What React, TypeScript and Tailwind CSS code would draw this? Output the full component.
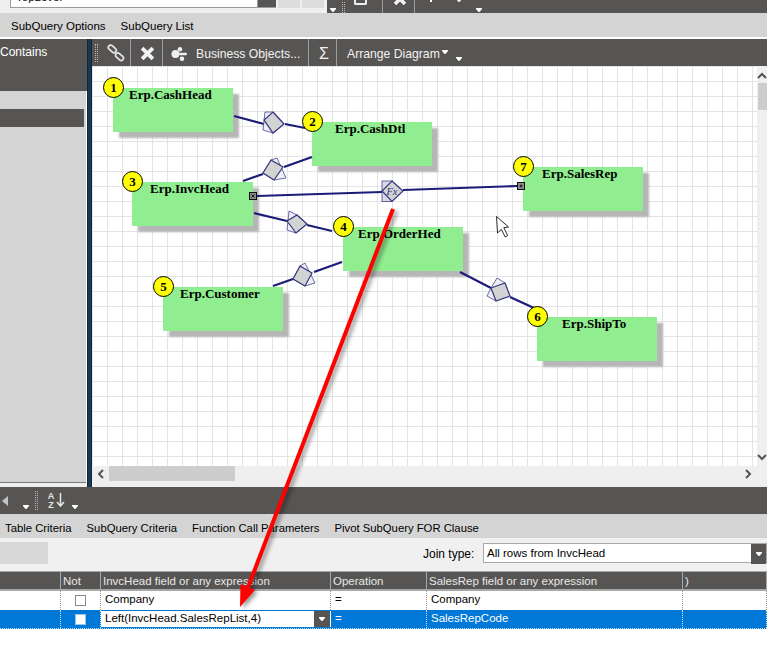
import React from "react";

const NODES = [
  { n: 1, label: "Erp.CashHead", x: 113, y: 88, w: 120, h: 44, pad: 16 },
  { n: 2, label: "Erp.CashDtl", x: 312, y: 122, w: 120, h: 44, pad: 23 },
  { n: 3, label: "Erp.InvcHead", x: 132, y: 182, w: 121, h: 44, pad: 18 },
  { n: 4, label: "Erp.OrderHed", x: 343, y: 227, w: 120, h: 44, pad: 15 },
  { n: 5, label: "Erp.Customer", x: 163, y: 287, w: 120, h: 44, pad: 17 },
  { n: 6, label: "Erp.ShipTo", x: 537, y: 317, w: 120, h: 44, pad: 25 },
  { n: 7, label: "Erp.SalesRep", x: 523, y: 167, w: 120, h: 44, pad: 19 },
];

// page coordinates, the svg viewBox lines up with the canvas
const LINES = [
  [234, 116, 264, 124], [285, 124, 305, 128],
  [243, 181, 263, 174], [284, 167, 312, 157],
  [254, 213, 287, 221], [307, 225, 332, 231],
  [273, 286, 293, 279], [314, 272, 342, 262],
  [460, 272, 491, 288], [510, 297, 534, 308],
  [257, 196, 382, 192], [403, 190, 517, 186],
];

const JOINS = [
  { back: "265,112 273,112 284,124 273,133 263,130", main: "273,112 284,124 273,133 264,120" },
  { back: "271,160 277,158 286,178 274,180 263,173", main: "271,160 283,167 274,180 263,173" },
  { back: "289,211 297,215 307,224 296,233 287,230", main: "297,215 307,224 296,233 287,221" },
  { back: "300,266 305,263 315,283 305,286 293,279", main: "300,266 312,273 305,286 293,279" },
  { back: "497,278 505,283 496,301 487,296 491,288", main: "505,283 510,296 496,301 491,288" },
];

const COLS = ["w-[61px]", "w-[40px]", "w-[230px]", "w-[96px]", "w-[256px]", "flex-1"];
const HEADERS = ["", "Not", "InvcHead field or any expression", "Operation", "SalesRep field or any expression", ")"];

function Caret({ className = "" }: { className?: string }) {
  return (
    <svg width="6" height="4" viewBox="0 0 7 4" preserveAspectRatio="none" className={"shrink-0 " + className}>
      <polygon points="0,0 7,0 7,1 5,3 4,4 3,4 2,3 0,1" fill="#fff" />
    </svg>
  );
}

function Grip({ className = "" }: { className?: string }) {
  return <div className={"w-[3px] shrink-0 border-x border-dotted border-[#b5b5b5] " + className} />;
}

function Sep({ className = "" }: { className?: string }) {
  return <div className={"w-px h-full shrink-0 bg-[#9c9c9c] " + className} />;
}

function BoldX({ size = 14 }: { size?: number }) {
  return (
    <svg width={size} height={size} viewBox="0 0 14 14" className="shrink-0">
      <path d="M2 2 12 12 M12 2 2 12" stroke="#f2f2f2" strokeWidth="3.6" />
    </svg>
  );
}

function Diagram() {
  return (
    <svg viewBox="92 66 665 400" className="absolute inset-0 w-[665px] h-[400px]">
      {LINES.map((l, i) => (
        <line key={i} x1={l[0]} y1={l[1]} x2={l[2]} y2={l[3]} stroke="#1b1b78" strokeWidth="2.2" />
      ))}
      {JOINS.map((j, i) => (
        <g key={i}>
          <polygon points={j.back} fill="#eeeef6" stroke="#46468c" strokeWidth="0.8" />
          <polygon points={j.main} fill="#d3d3d3" stroke="#35357f" strokeWidth="1.2" />
        </g>
      ))}
      <rect x="382" y="181" width="10" height="20.5" fill="#d9d9e6" stroke="#46468c" strokeWidth="0.8" />
      <polygon points="392,181 403,191 392,201.5 382,191" fill="#d3d3d3" stroke="#35357f" strokeWidth="1.2" />
      <text x="392" y="194.5" textAnchor="middle" fontSize="10.5" fontStyle="italic" fontFamily="Liberation Serif, serif" fill="#33338c">Fx</text>
      <g fill="#8c8c8c" stroke="#111" strokeWidth="1">
        <rect x="249.5" y="192.5" width="7" height="7" />
        <rect x="517.5" y="182.5" width="7" height="7" />
      </g>
      <path d="M251.5 194.5 254.5 197.5 M254.5 194.5 251.5 197.5 M519.5 186 522.5 186 M521 184.5 521 187.5" stroke="#111" strokeWidth="1" />
      <path d="M496.5 216.5 497.5 233 501.3 229.3 505.2 237 507.6 235.6 503.8 227.6 508.5 227Z" fill="#fff" stroke="#111" strokeWidth="0.9" />
    </svg>
  );
}

function Node({ n }: { n: (typeof NODES)[number] }) {
  return (
    <div
      className="absolute bg-[#90ee90] shadow-[6px_6px_2px_#b6b6b6] font-['Liberation_Serif',serif] font-bold text-[13px] leading-[14px] text-black whitespace-nowrap"
      style={{ left: n.x - 92, top: n.y - 66, width: n.w, height: n.h, paddingLeft: n.pad }}
    >
      {n.label}
    </div>
  );
}

function Badge({ n }: { n: (typeof NODES)[number] }) {
  return (
    <div
      className="absolute w-[21px] h-[21px] rounded-full bg-[#ffff00] border border-black flex items-center justify-center font-['Liberation_Serif',serif] font-bold text-[13px] leading-none text-black"
      style={{ left: n.x - 92 - 10, top: n.y - 66 - 11 }}
    >
      {n.n}
    </div>
  );
}

function Tabs({ items, className }: { items: string[]; className: string }) {
  return (
    <div className={"h-[24px] bg-[#d4d4d4] flex items-center pt-[4px] text-black shrink-0 " + className}>
      {items.map((t) => (
        <span key={t} className="whitespace-nowrap">{t}</span>
      ))}
    </div>
  );
}

function Cell({ i, className = "", children }: { i: number; className?: string; children?: React.ReactNode }) {
  return (
    <div className={"h-full shrink-0 border-r border-dotted border-[#9a9a9a] flex items-center " + COLS[i] + " " + className}>
      {children}
    </div>
  );
}

export default function App() {
  return (
    <div className="relative w-[767px] h-[656px] overflow-hidden bg-white font-['Liberation_Sans',sans-serif] text-[11.5px] flex flex-col">
      {/* top strip, cut off by the crop */}
      <div className="h-[13px] flex shrink-0 bg-[#efefef]">
        <div className="ml-[10px] w-[248px] h-[8px] bg-white border border-t-0 border-[#9a9a9a] overflow-hidden flex items-end pl-[5px]">
          <span className="leading-[12px] mb-[4px] text-black">TopLevel</span>
        </div>
        <div className="w-[18px] h-[8px] bg-[#575553] border-b border-[#9a9a9a]" />
        <div className="ml-[2px] w-[22px] h-[8px] bg-[#dcdcdc]" />
        <div className="ml-[2px] w-[22px] h-[8px] bg-[#dcdcdc]" />
        <div className="ml-[3px] flex-1 bg-[#575553] flex items-end overflow-hidden">
          <Caret className="ml-[3px] mb-[1px]" />
          <Grip className="ml-[6px] h-[11px]" />
          <div className="ml-[9px] mb-[8px] w-[13px] h-[6px] border-2 border-t-0 border-[#eee] rounded-b-[2px]" />
          <Sep className="ml-[15px]" />
          <div className="ml-[10px] mb-[7px] -mt-[10px] h-[6px] overflow-hidden flex items-end"><BoldX /></div>
          <Sep className="ml-[7px]" />
          <div className="ml-[15px] mb-[11px] w-[2px] h-[2px] bg-white" />
          <Caret className="ml-[24px] mb-[11px]" />
          <Caret className="ml-[14px] mb-[1px]" />
        </div>
      </div>

      <Tabs items={["SubQuery Options", "SubQuery List"]} className="gap-[15px] pl-[11px]" />
      <div className="h-[2px] bg-white shrink-0" />

      {/* middle: left panel, splitter, diagram */}
      <div className="h-[448px] flex shrink-0">
        <div className="w-[87px] shrink-0 flex flex-col">
          <div className="h-[52px] bg-[#575553] text-white text-[12px] pt-[7px] leading-[13px] whitespace-nowrap">Contains</div>
          <div className="h-[392px] bg-[#d4d4d4] border-b border-[#777] mr-px pt-[18px]">
            <div className="h-[18px] w-[84px] bg-[#575553]" />
          </div>
          <div className="flex-1 bg-[#efefef]" />
        </div>
        <div className="w-[5px] shrink-0 bg-[#0c3c60] border-x border-[#222]" />
        <div className="flex-1 flex flex-col min-w-0">
          <div className="h-[27px] bg-[#575553] text-[#f2f2f2] text-[12.2px] flex items-center shrink-0">
            <Grip className="ml-[3px] h-[18px]" />
            <svg width="18" height="18" viewBox="0 0 18 18" className="ml-[9px] shrink-0" fill="none" stroke="#e6e6e6" strokeWidth="1.7">
              <rect x="0.8" y="2.6" width="9" height="4.6" rx="2.3" transform="rotate(42 5.3 4.9)" />
              <rect x="8" y="10.4" width="9" height="4.6" rx="2.3" transform="rotate(42 12.5 12.7)" />
            </svg>
            <Sep className="ml-[5px]" />
            <div className="ml-[9px] mt-[2px]"><BoldX size={15} /></div>
            <Sep className="ml-[7px]" />
            <svg width="16" height="14" viewBox="0 0 16 14" className="ml-[8px] mt-[3px] shrink-0" fill="#eee">
              <circle cx="4.5" cy="7" r="4" />
              <circle cx="9" cy="2.3" r="2.3" />
              <rect x="8" y="5.8" width="8" height="2.5" rx="1.2" />
              <circle cx="11" cy="11.7" r="2.3" />
            </svg>
            <span className="ml-[9px] mt-[3px] whitespace-nowrap w-[112px]">Business Objects...</span>
            <Sep />
            <span className="ml-[10px] mt-[3px] w-[17px] text-[16px] leading-none">Σ</span>
            <Sep />
            <span className="ml-[10px] mt-[3px] whitespace-nowrap">Arrange Diagram</span>
            <Caret className="ml-[2px] -mt-[2px]" />
            <Caret className="ml-[8px] mt-[13px]" />
          </div>
          <div className="flex-1 flex min-h-0">
            <div className="relative w-[665px] h-[400px] shrink-0 overflow-hidden bg-white bg-[linear-gradient(to_right,#e4e4e4_1px,transparent_1px),linear-gradient(to_bottom,#e4e4e4_1px,transparent_1px)] bg-[size:15px_15px]">
              {NODES.map((n) => <Node key={n.n} n={n} />)}
              <Diagram />
              {NODES.map((n) => <Badge key={n.n} n={n} />)}
            </div>
            <div className="flex-1 bg-[#efefef] flex flex-col items-center overflow-hidden">
              <svg width="10" height="7" viewBox="0 0 10 7" className="mt-[6px] shrink-0"><path d="M1 6 5 2 9 6" fill="none" stroke="#555" strokeWidth="2" /></svg>
              <div className="mt-[4px] w-full h-[27px] bg-[#cdcdcd] ml-[1px]" />
              <svg width="10" height="7" viewBox="0 0 10 7" className="mt-auto mb-[5px] shrink-0"><path d="M1 1 5 5 9 1" fill="none" stroke="#555" strokeWidth="2" /></svg>
            </div>
          </div>
          <div className="h-[21px] bg-[#efefef] flex items-start shrink-0">
            <svg width="7" height="10" viewBox="0 0 7 10" className="ml-[5px] mt-[3px] shrink-0"><path d="M6 1 2 5 6 9" fill="none" stroke="#555" strokeWidth="2" /></svg>
            <div className="ml-[5px] w-[126px] h-[15px] bg-[#cdcdcd]" />
            <svg width="7" height="10" viewBox="0 0 7 10" className="ml-[510px] mt-[3px] shrink-0"><path d="M1 1 5 5 1 9" fill="none" stroke="#555" strokeWidth="2" /></svg>
          </div>
        </div>
      </div>

      {/* lower toolbar */}
      <div className="h-[27px] bg-[#575553] flex items-center shrink-0">
        <svg width="6" height="10" viewBox="0 0 6 10" className="ml-[2px] shrink-0"><polygon points="6,0 6,10 0,5" fill="#c4c4c4" /></svg>
        <Caret className="ml-[15px] mt-[12px]" />
        <Grip className="ml-[6px] h-[19px]" />
        <div className="ml-[8px] w-[10px] flex flex-col items-center font-bold text-[9px] leading-[9px] text-[#e6e6e6]">
          <span>A</span>
          <span>Z</span>
        </div>
        <svg width="9" height="15" viewBox="0 0 9 15" className="shrink-0"><path d="M4.5 0V13 M1 9 4.5 13 8 9" fill="none" stroke="#e6e6e6" strokeWidth="1.5" /></svg>
        <Caret className="ml-[7px] mt-[12px]" />
      </div>

      <Tabs items={["Table Criteria", "SubQuery Criteria", "Function Call Parameters", "Pivot SubQuery FOR Clause"]} className="gap-[15px] pl-[5px] text-[11.3px]" />

      {/* join type row */}
      <div className="h-[33px] bg-[#f0f0f0] flex items-start shrink-0">
        <div className="mt-[4px] w-[48px] h-[22px] bg-[#d8d8d8]" />
        <span className="ml-[375px] mt-[9px] w-[60px] text-[12px] leading-[14px] text-black">Join type:</span>
        <div className="mt-[5px] flex-1 h-[20px] bg-white border border-[#a8a8a8] flex items-center pl-[3px] pt-[1px] text-black">
          <span className="flex-1">All rows from InvcHead</span>
          <div className="w-[15px] -my-[1px] h-[20px] bg-[#575553] flex items-center justify-center"><Caret /></div>
        </div>
      </div>

      {/* grid */}
      <div className="h-[20px] bg-[#575553] border-y border-[#a8a8a8] border-b-2 flex text-[#e8e8e8] shrink-0">
        {HEADERS.map((h, i) => (
          <div key={i} className={"h-full shrink-0 border-r border-[#a8a8a8] flex items-center pl-[2px] pt-[3px] whitespace-nowrap " + COLS[i]}>{h}</div>
        ))}
      </div>
      <div className="h-[19px] flex text-black shrink-0">
        <Cell i={0} />
        <Cell i={1} className="justify-center"><div className="w-[11px] h-[11px] bg-white border border-[#8a8a8a]" /></Cell>
        <Cell i={2} className="pl-[4px] pb-[2px]">Company</Cell>
        <Cell i={3} className="pl-[4px] pb-[2px]">=</Cell>
        <Cell i={4} className="pl-[4px] pb-[2px]">Company</Cell>
        <Cell i={5} />
      </div>
      <div className="h-[19px] flex bg-[#0078d7] text-white border-b border-dotted border-[#bcd9f2] shrink-0">
        <Cell i={0} className="border-[#cfe4f7]" />
        <Cell i={1} className="justify-center border-[#cfe4f7]"><div className="w-[11px] h-[11px] bg-white border border-[#9ac6ec]" /></Cell>
        <div className="w-[230px] h-full shrink-0 bg-white flex items-center text-black pl-[4px] border-y border-[#0078d7]">
          <span className="flex-1">Left(InvcHead.SalesRepList,4)</span>
          <div className="w-[16px] h-full bg-[#575553] flex items-center justify-center mr-px"><Caret /></div>
        </div>
        <Cell i={3} className="pl-[4px] border-[#cfe4f7]">=</Cell>
        <Cell i={4} className="pl-[4px] border-[#cfe4f7]">SalesRepCode</Cell>
        <Cell i={5} className="border-[#cfe4f7]" />
      </div>

      {/* red callout arrow drawn over everything */}
      <svg width="767" height="656" viewBox="0 0 767 656" className="absolute inset-0 pointer-events-none drop-shadow-[3px_2px_2px_rgba(0,0,0,0.4)]">
        <line x1="393" y1="209" x2="247" y2="590" stroke="#ff0000" strokeWidth="4" />
        <polygon points="240,607 240.5,584 255,590" fill="#ff0000" />
      </svg>
    </div>
  );
}
